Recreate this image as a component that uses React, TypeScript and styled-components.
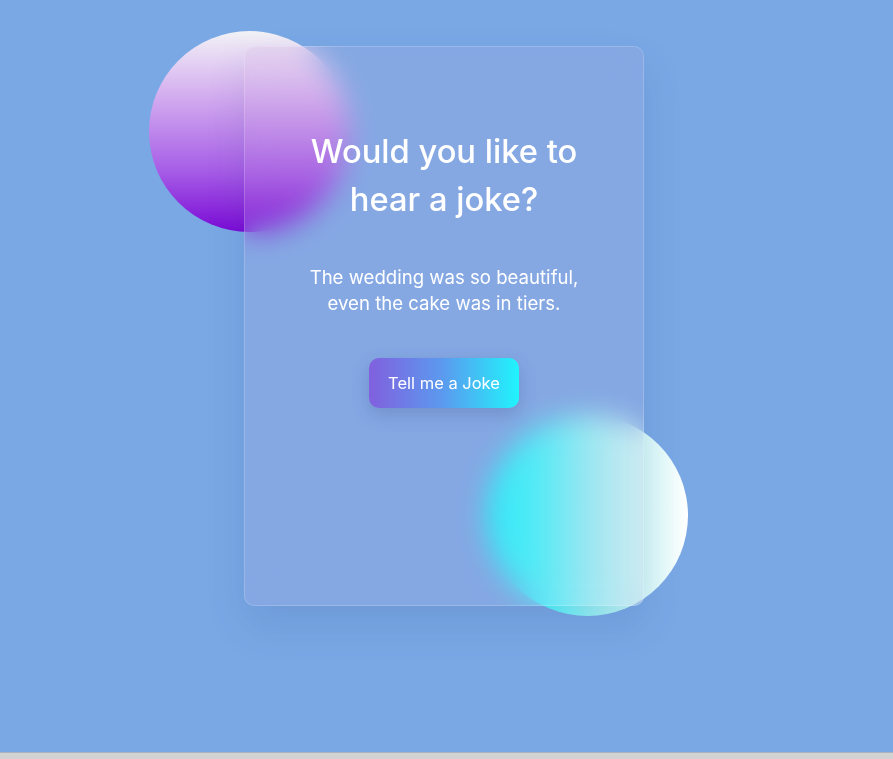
import React from "react";
import styled, { createGlobalStyle } from "styled-components";

const Global = createGlobalStyle`
  html, body { margin: 0; padding: 0; background: #d2d2d2; }
  body { font-family: "Inter", "Noto Sans", sans-serif; overflow: hidden; }
  * { box-sizing: border-box; }
`;

const Page = styled.main`
  height: 753px;
  background: #79a8e5;
  border-bottom: 1px solid #a9b2bd;
  display: flex;
  justify-content: center;
  align-items: flex-start;
  padding: 46px 5px 0 0;
`;

const Stage = styled.div`
  position: relative;
  width: 400px;
  height: 560px;
`;

const Circle = styled.div<{ $left: number; $top: number; $bg: string }>`
  position: absolute;
  left: ${(p) => p.$left}px;
  top: ${(p) => p.$top}px;
  width: 201px;
  height: 201px;
  border-radius: 50%;
  background: ${(p) => p.$bg};
`;

const Card = styled.section`
  position: relative;
  width: 400px;
  height: 560px;
  border-radius: 10px;
  background: rgba(200, 165, 215, 0.15);
  border: 1px solid rgba(255, 255, 255, 0.18);
  backdrop-filter: blur(14px);
  -webkit-backdrop-filter: blur(14px);
  box-shadow: 0 20px 40px rgba(30, 60, 120, 0.12);
  display: flex;
  flex-direction: column;
  align-items: center;
  padding: 80px 30px 0;
  color: #fff;
  text-align: center;
`;

const Title = styled.h1`
  margin: 0;
  font-size: 32.7px;
  line-height: 48px;
  font-weight: 500;
  max-width: 300px;
`;

const Joke = styled.p`
  margin: 41px 0 0;
  font-size: 18.6px;
  line-height: 26px;
  font-weight: 400;
  max-width: 290px;
`;

const Button = styled.button`
  margin-top: 42px;
  width: 150px;
  height: 50px;
  border: none;
  border-radius: 10px;
  background: linear-gradient(to right, #8160de, #5a9bef 50%, #20f4fc);
  color: #fff;
  font-family: inherit;
  font-size: 16.5px;
  box-shadow: 0 6px 18px rgba(40, 60, 120, 0.22);
  cursor: pointer;
`;

export default function App() {
  return (
    <>
      <Global />
      <Page>
        <Stage>
          <Circle $left={-95} $top={-15} $bg="linear-gradient(to bottom, #f2f2f6, #d6b2f0 30%, #a65ce6 70%, #7a0ad6)" />
          <Circle $left={243} $top={369} $bg="linear-gradient(to right, #10f8ff, #40f6fc 25%, #92f2f6 50%, #ccf6f6 75%, #ffffff)" />
          <Card>
            <Title>Would you like to hear a joke?</Title>
            <Joke>The wedding was so beautiful, even the cake was in tiers.</Joke>
            <Button>Tell me a Joke</Button>
          </Card>
        </Stage>
      </Page>
    </>
  );
}
